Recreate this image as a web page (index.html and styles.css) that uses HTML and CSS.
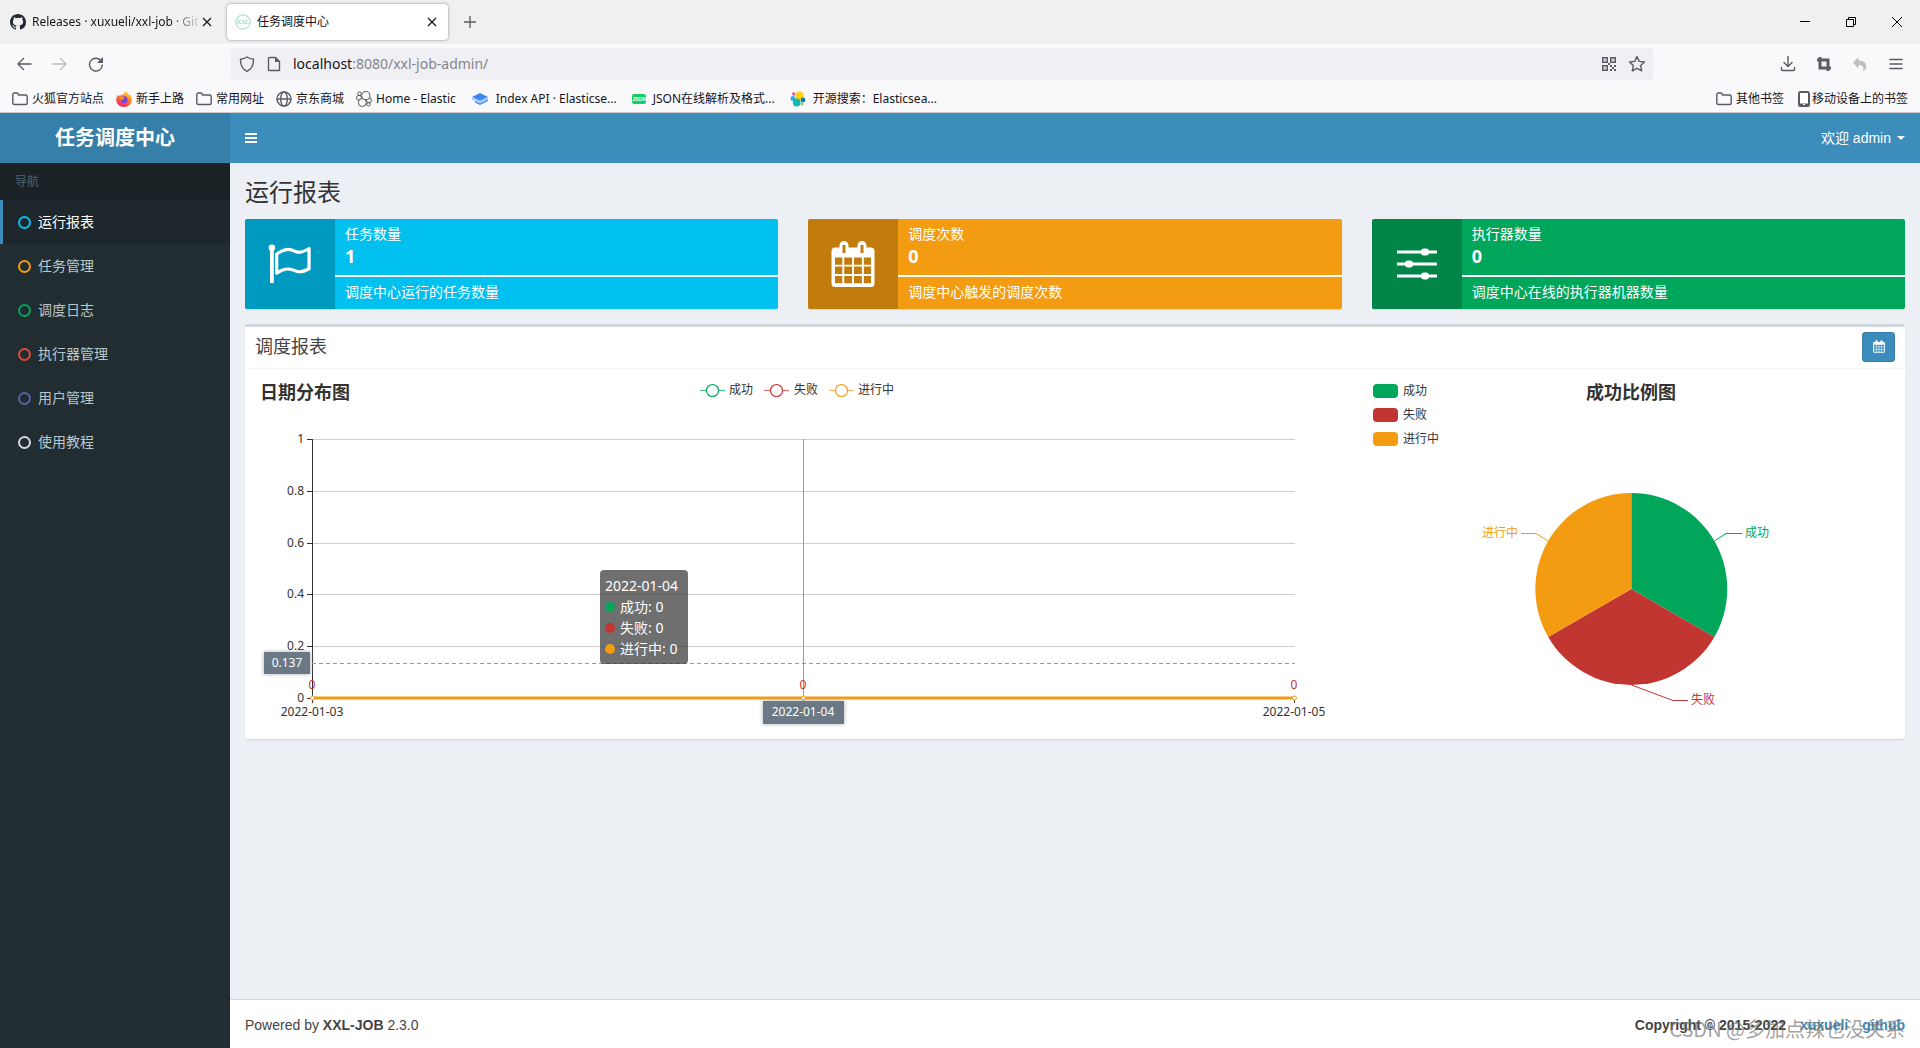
FILE: index.html
```html
<!DOCTYPE html>
<html lang="zh-CN">
<head>
<meta charset="utf-8">
<title>任务调度中心</title>
<link rel="stylesheet" href="styles.css">
</head>
<body>
<header class="browser">
  <div class="tabstrip">
    <div class="tab">
      <svg class="tab-icon" width="16" height="16" viewBox="0 0 16 16"><path fill="#24292f" d="M8 0C3.58 0 0 3.58 0 8c0 3.54 2.29 6.53 5.47 7.59.4.07.55-.17.55-.38 0-.19-.01-.82-.01-1.49-2.01.37-2.53-.49-2.69-.94-.09-.23-.48-.94-.82-1.13-.28-.15-.68-.52-.01-.53.63-.01 1.08.58 1.23.82.72 1.21 1.87.87 2.33.66.07-.52.28-.87.51-1.07-1.78-.2-3.64-.89-3.64-3.95 0-.87.31-1.59.82-2.15-.08-.2-.36-1.02.08-2.12 0 0 .67-.21 2.2.82a7.6 7.6 0 0 1 4 0c1.53-1.04 2.2-.82 2.2-.82.44 1.1.16 1.92.08 2.12.51.56.82 1.27.82 2.15 0 3.07-1.87 3.75-3.65 3.95.29.25.54.73.54 1.48 0 1.07-.01 1.93-.01 2.2 0 .21.15.46.55.38A8.01 8.01 0 0 0 16 8c0-4.42-3.58-8-8-8z"/></svg>
      <span class="tab-title fade">Releases · xuxueli/xxl-job · Git</span>
      <button class="tab-close" aria-label="关闭标签页"><svg width="10" height="10" viewBox="0 0 10 10"><path d="M1 1l8 8M9 1L1 9" stroke="#15141a" stroke-width="1.2"/></svg></button>
    </div>
    <div class="tab active">
      <svg class="tab-icon" width="16" height="16" viewBox="0 0 16 16"><circle cx="8" cy="8" r="7.2" fill="#fff" stroke="#9ad9c0"/><text x="8" y="10" text-anchor="middle" class="xxl-mark">XXL</text></svg>
      <span class="tab-title">任务调度中心</span>
      <button class="tab-close" aria-label="关闭标签页"><svg width="10" height="10" viewBox="0 0 10 10"><path d="M1 1l8 8M9 1L1 9" stroke="#15141a" stroke-width="1.2"/></svg></button>
    </div>
    <button class="new-tab" aria-label="新建标签页"><svg width="12" height="12" viewBox="0 0 12 12"><path d="M6 0v12M0 6h12" stroke="#5b5b66" stroke-width="1.3"/></svg></button>
    <div class="window-controls">
      <button aria-label="最小化"><svg width="10" height="10" viewBox="0 0 10 10"><path d="M0 4.500h10" stroke="#000"/></svg></button>
      <button aria-label="还原"><svg width="10" height="10" viewBox="0 0 10 10"><path d="M.5 2.500h7v7h-7zM2.500 2V.5h7v7H8" fill="none" stroke="#000"/></svg></button>
      <button aria-label="关闭"><svg width="10" height="10" viewBox="0 0 10 10"><path d="M0 0l10 10M10 0L0 10" stroke="#000"/></svg></button>
    </div>
  </div>

  <div class="toolbar">
    <div class="nav-buttons">
      <button aria-label="后退"><svg width="16" height="16" viewBox="0 0 16 16"><path d="M15 8H2M7.500 2.500L2 8l5.500 5.500" class="line"/></svg></button>
      <button aria-label="前进" disabled><svg width="16" height="16" viewBox="0 0 16 16"><path d="M1 8h13M8.500 2.500L14 8l-5.500 5.500" class="line pale"/></svg></button>
      <button aria-label="刷新"><svg width="16" height="16" viewBox="0 0 16 16"><path d="M13.500 5.500A6.400 6.400 0 1 0 14.300 9" class="line"/><path d="M15 1v6H9z" fill="#5b5b66"/></svg></button>
    </div>
    <div class="urlbar">
      <svg width="16" height="16" viewBox="0 0 16 16"><path d="M8 1c2 1.500 4 2 6.500 2.200C14.700 9 12.500 13 8 15.300 3.500 13 1.300 9 1.500 3.200 4 3 6 2.500 8 1z" class="line"/></svg>
      <svg width="16" height="16" viewBox="0 0 16 16"><path d="M3.500 1.500h6l4 4v9h-10a1 1 0 0 1-1-1v-11a1 1 0 0 1 1-1z" class="line"/><path d="M9 1v5h5z" fill="#5b5b66"/></svg>
      <div class="url" role="textbox" aria-label="地址" contenteditable="true" spellcheck="false">localhost<span class="url-rest">:8080/xxl-job-admin/</span></div>
      <svg width="16" height="16" viewBox="0 0 16 16" fill="#5b5b66"><path d="M1 1h6v6H1zM2.500 2.500v3h3v-3zM9 1h6v6H9zM10.500 2.500v3h3v-3zM1 9h6v6H1zM2.500 10.500v3h3v-3z" fill-rule="evenodd"/><path d="M3.500 3.500h1v1h-1zM11.500 3.500h1v1h-1zM3.500 11.500h1v1h-1zM9 9h2v2H9zM11 11h2v2h-2zM13 9h2v2h-2zM9 13h2v2H9zM13 13h2v2h-2zM7 7h2v2H7z"/></svg>
      <svg width="18" height="18" viewBox="0 0 18 18"><path d="M9 1.500l2.200 4.900 5.300.6-3.900 3.600 1.100 5.300L9 13.300l-4.700 2.600 1.100-5.300L1.500 7l5.300-.6z" class="line"/></svg>
    </div>
    <div class="tool-buttons">
      <button aria-label="下载"><svg width="16" height="16" viewBox="0 0 16 16"><path d="M8 0v10M4 6.500L8 10.500l4-4M1.500 11.500v2q0 1 1 1h11q1 0 1-1v-2" class="line"/></svg></button>
      <button aria-label="截图"><svg width="16" height="16" viewBox="0 0 16 16"><path d="M4 1v11h11M1 4h11v11" fill="none" stroke="#5b5b66" stroke-width="3"/></svg></button>
      <button aria-label="撤销" disabled><svg width="16" height="16" viewBox="0 0 16 16"><path d="M6.500 1v3.500C12 4.500 15 7.500 14 12c-.5 1.500-1.500 2.500-3.500 3 2.500-3.500 0-6-4-6v3.500L1 6.700z" fill="#bdbdc2"/></svg></button>
      <button aria-label="菜单"><svg width="14" height="12" viewBox="0 0 14 12"><path d="M1 1.500h12M1 6h12M1 10.500h12" class="line"/></svg></button>
    </div>
  </div>

  <nav class="bookmarks" aria-label="书签">
    <a href="#"><svg width="16" height="14" viewBox="0 0 16 14"><path d="M.8 2.500q0-1.500 1.500-1.500h3l1.500 2h6.900q1.500 0 1.500 1.500v6.500q0 1.500-1.500 1.500H2.300q-1.500 0-1.500-1.500z" class="line"/></svg>火狐官方站点</a>
    <a href="#"><svg width="16" height="16" viewBox="0 0 16 16"><defs><linearGradient id="fox" x1="0.800" y1="0" x2="0.300" y2="1"><stop offset="0" stop-color="#ffe23a"/><stop offset=".5" stop-color="#ff7a28"/><stop offset="1" stop-color="#f0206c"/></linearGradient></defs><path d="M9.500 0c2 1.500 2 2.500 3.500 4l1-.5c1.500 2 2 4 1.500 6.500-1 4-4 6-7.500 6-4.500 0-8-3.500-7.700-8C.4 6.500 1 5 2.200 3.700L3 5l2-1c1.500 0 2-1 3-1.200Q8 1.500 9.500 0z" fill="url(#fox)"/><circle cx="8.200" cy="8.700" r="3.400" fill="#7542e5"/><path d="M4 6.500c2-1 4-.5 5 1-1.500-.2-2 .5-2 1.200-1.500.3-3-.7-3-2.200z" fill="#ff9a1f"/></svg>新手上路</a>
    <a href="#"><svg width="16" height="14" viewBox="0 0 16 14"><path d="M.8 2.500q0-1.500 1.500-1.500h3l1.500 2h6.900q1.500 0 1.500 1.500v6.500q0 1.500-1.500 1.500H2.300q-1.500 0-1.500-1.500z" class="line"/></svg>常用网址</a>
    <a href="#"><svg width="16" height="16" viewBox="0 0 16 16"><g class="line"><circle cx="8" cy="8" r="7"/><ellipse cx="8" cy="8" rx="3.300" ry="7"/><path d="M1 8h14"/></g></svg>京东商城</a>
    <a href="#"><svg width="16" height="16" viewBox="0 0 16 16"><g fill="#f9f9fb" stroke="#555"><circle cx="3.600" cy="2.700" r="1.800"/><circle cx="3" cy="6.800" r="2.500"/><circle cx="12.500" cy="13.300" r="1.700"/><circle cx="13" cy="9.300" r="2.500"/><circle cx="6.300" cy="11.500" r="4"/><circle cx="9.800" cy="4.600" r="4.100"/></g></svg>Home - Elastic</a>
    <a href="#" class="wide-gap"><svg width="18" height="16" viewBox="0 0 18 16"><path d="M9 2l8 4-8 4-8-4z" fill="#3c86f4"/><path d="M1 6l8 4 8-4v2.500l-8 4-8-4z" fill="#a9caff"/><path d="M4 10l5 2.500L17 8.500V10l-8 4-5-2.500z" fill="#3c86f4"/></svg>Index API · Elasticse...</a>
    <a href="#" class="wide-gap"><svg width="14" height="10" viewBox="0 0 14 10"><rect width="14" height="10" rx="2" fill="#19ce60"/><text x="7" y="7" text-anchor="middle" class="json-mark">JSON</text></svg>JSON在线解析及格式...</a>
    <a href="#" class="wide-gap"><svg width="16" height="16" viewBox="0 0 16 16"><circle cx="9.500" cy="4.500" r="4" fill="#fed10a"/><circle cx="3.700" cy="3" r="1.700" fill="#f04e98"/><circle cx="3" cy="7.500" r="2.500" fill="#3ba8df"/><circle cx="13" cy="9" r="2.400" fill="#0b7aa5"/><circle cx="6.700" cy="11.500" r="3.900" fill="#17b7ae"/><circle cx="12.200" cy="13" r="1.500" fill="#93c83e"/></svg>开源搜索：Elasticsea...</a>
    <a href="#" class="push-right"><svg width="16" height="14" viewBox="0 0 16 14"><path d="M.8 2.500q0-1.500 1.500-1.500h3l1.500 2h6.900q1.500 0 1.500 1.500v6.500q0 1.500-1.500 1.500H2.300q-1.500 0-1.500-1.500z" class="line"/></svg>其他书签</a>
    <a href="#" class="mobile"><svg width="12" height="16" viewBox="0 0 12 16"><rect x="1" y="1" width="10" height="14" rx="1.500" fill="#fff" stroke="#5b5b66" stroke-width="2"/><path d="M1 12.500h10V15H1z" fill="#5b5b66"/><path d="M5 13.500h2" stroke="#fff"/></svg>移动设备上的书签</a>
  </nav>
</header>

<div class="app">
  <aside class="sidebar">
    <a href="#" class="logo">任务调度中心</a>
    <h2 class="side-heading">导航</h2>
    <ul class="side-menu">
      <li><a href="#" class="current"><i class="ring aqua"></i>运行报表</a></li>
      <li><a href="#"><i class="ring yellow"></i>任务管理</a></li>
      <li><a href="#"><i class="ring green"></i>调度日志</a></li>
      <li><a href="#"><i class="ring red"></i>执行器管理</a></li>
      <li><a href="#"><i class="ring purple"></i>用户管理</a></li>
      <li><a href="#"><i class="ring gray"></i>使用教程</a></li>
    </ul>
  </aside>

  <div class="main">
    <header class="topbar">
      <button class="menu-toggle" aria-label="切换导航"><svg width="12" height="12" viewBox="0 0 12 12"><path d="M0 2h12M0 6h12M0 10h12" stroke="#fff" stroke-width="2"/></svg></button>
      <button class="user-menu">欢迎 admin<i class="caret"></i></button>
    </header>

    <main class="content">
      <h1>运行报表</h1>
      <section class="stats">
        <article class="stat stat-aqua">
          <div class="stat-icon"><svg width="44" height="40" viewBox="0 0 46 42"><circle cx="4" cy="4" r="3.500" fill="#fff"/><path d="M4 4v37" stroke="#fff" stroke-width="4"/><path d="M9 10.500C17 5 22 4.500 28 7.500c6 2.500 9 .5 15-2.500v21c-6 3.500-10 4.500-15 2-6-3-11-2.500-19 2.500z" fill="none" stroke="#fff" stroke-width="3.400" stroke-linejoin="round"/></svg></div>
          <div class="stat-body"><span>任务数量</span><strong>1</strong><p>调度中心运行的任务数量</p></div>
        </article>
        <article class="stat stat-yellow">
          <div class="stat-icon"><svg width="44" height="46" viewBox="0 0 44 46"><path fill="#fff" fill-rule="evenodd" d="M4 6.500h4.500V4.500a4.500 4.500 0 0 1 9 0v2h9V4.500a4.500 4.500 0 0 1 9 0v2H40a3.500 3.500 0 0 1 3.500 3.500v32.500A3.500 3.500 0 0 1 40 46H4a3.500 3.500 0 0 1-3.500-3.500V10A3.500 3.500 0 0 1 4 6.500zM11.500 4v8h3V4zM29.500 4v8h3V4zM4 16.500v7.200h7.300v-7.200zM13.200 16.500v7.200h7.900v-7.200zM23 16.500v7.200h7.900v-7.200zM32.800 16.500v7.200H40v-7.200zM4 25.600v7.400h7.300v-7.400zM13.200 25.600v7.400h7.900v-7.400zM23 25.600v7.400h7.900v-7.400zM32.800 25.600v7.400H40v-7.400zM4 35v7.200h7.300V35zM13.200 35v7.200h7.900V35zM23 35v7.200h7.900V35zM32.800 35v7.200H40V35z"/></svg></div>
          <div class="stat-body"><span>调度次数</span><strong>0</strong><p>调度中心触发的调度次数</p></div>
        </article>
        <article class="stat stat-green">
          <div class="stat-icon"><svg width="40" height="32" viewBox="0 0 40 32"><path d="M0 4h40M0 16h40M0 28h40" stroke="#fff" stroke-width="3"/><g fill="#fff"><rect x="24" y="0.500" width="8" height="7" rx="3"/><rect x="8" y="12.500" width="8" height="7" rx="3"/><rect x="24" y="24.500" width="8" height="7" rx="3"/></g></svg></div>
          <div class="stat-body"><span>执行器数量</span><strong>0</strong><p>调度中心在线的执行器机器数量</p></div>
        </article>
      </section>

      <section class="panel">
        <div class="panel-head">
          <h2>调度报表</h2>
          <button class="date-button" aria-label="选择日期"><svg width="12" height="13" viewBox="0 0 44 46"><path fill="#fff" fill-rule="evenodd" d="M4 6.500h4.500V4.500a4.500 4.500 0 0 1 9 0v2h9V4.500a4.500 4.500 0 0 1 9 0v2H40a3.500 3.500 0 0 1 3.500 3.500v32.500A3.500 3.500 0 0 1 40 46H4a3.500 3.500 0 0 1-3.500-3.500V10A3.500 3.500 0 0 1 4 6.500zM4 16.500v7.200h7.300v-7.200zM13.200 16.500v7.200h7.900v-7.200zM23 16.500v7.200h7.900v-7.200zM32.800 16.500v7.200H40v-7.200zM4 25.600v7.400h7.300v-7.400zM13.200 25.600v7.400h7.900v-7.400zM23 25.600v7.400h7.900v-7.400zM32.800 25.600v7.400H40v-7.400zM4 35v7.200h7.300V35zM13.200 35v7.200h7.900V35zM23 35v7.200h7.900V35zM32.800 35v7.200H40V35z"/></svg></button>
        </div>
        <div class="charts">
          <div class="chart-line">
            <svg class="chart" viewBox="0 0 1083 350" preserveAspectRatio="xMinYMin meet" role="img" aria-label="日期分布图">
              <text x="5" y="20" class="chart-title">日期分布图</text>
              <g fill="#fff" stroke-width="1.200">
                <g stroke="#00a65a"><path d="M445 11.500h25" stroke-opacity=".7"/><circle cx="457.500" cy="11.500" r="6"/></g>
                <g stroke="#c23632"><path d="M509 11.500h25" stroke-opacity=".7"/><circle cx="521.500" cy="11.500" r="6"/></g>
                <g stroke="#f39c12"><path d="M574 11.500h25" stroke-opacity=".7"/><circle cx="586.500" cy="11.500" r="6"/></g>
              </g>
              <text x="474" y="15">成功</text>
              <text x="539" y="15">失败</text>
              <text x="603" y="15">进行中</text>
              <path d="M57 60.500h983M57 112.500h983M57 164.500h983M57 215.500h983M57 267.500h983" stroke="#ccc"/>
              <path d="M57.500 60v264M52 60.500h5M52 112.500h5M52 164.500h5M52 215.500h5M52 267.500h5M52 319.500h988M548.500 319v5M1039.500 319v5" stroke="#333" fill="none"/>
              <g text-anchor="end">
                <text x="49" y="64">1</text>
                <text x="49" y="116">0.8</text>
                <text x="49" y="168">0.6</text>
                <text x="49" y="219">0.4</text>
                <text x="49" y="271">0.2</text>
                <text x="49" y="323">0</text>
              </g>
              <g text-anchor="middle">
                <text x="57" y="337">2022-01-03</text>
                <text x="1039" y="337">2022-01-05</text>
              </g>
              <path d="M548.500 60v259" stroke="#999"/>
              <path d="M57 284.500h983" stroke="#999" stroke-dasharray="4 3"/>
              <path d="M57 319h983" stroke="#f39c12" stroke-width="3"/>
              <g fill="#fff" stroke="#f39c12"><circle cx="57.500" cy="319" r="2"/><circle cx="548.500" cy="319" r="2"/><circle cx="1039.500" cy="319" r="2"/></g>
              <g text-anchor="middle" class="value">
                <text x="57" y="310">0</text><text x="548" y="310">0</text><text x="1039" y="310">0</text>
              </g>
              <g class="pointer-label" text-anchor="middle">
                <rect x="9" y="273" width="46" height="22"/>
                <text x="32" y="288">0.137</text>
                <rect x="508" y="322" width="81" height="23"/>
                <text x="548" y="337">2022-01-04</text>
              </g>
            </svg>
            <div class="tooltip" role="tooltip">
              <div>2022-01-04</div>
              <div><i class="dot green"></i>成功: 0</div>
              <div><i class="dot red"></i>失败: 0</div>
              <div><i class="dot yellow"></i>进行中: 0</div>
            </div>
          </div>
          <div class="chart-pie">
            <svg class="chart" viewBox="0 0 526 350" preserveAspectRatio="xMinYMin meet" role="img" aria-label="成功比例图">
              <rect x="5" y="5" width="25" height="14" rx="4" fill="#00a65a"/>
              <rect x="5" y="29" width="25" height="14" rx="4" fill="#c23632"/>
              <rect x="5" y="53" width="25" height="14" rx="4" fill="#f39c12"/>
              <text x="35" y="16">成功</text>
              <text x="35" y="40">失败</text>
              <text x="35" y="64">进行中</text>
              <text x="263" y="20" text-anchor="middle" class="chart-title">成功比例图</text>
              <path d="M263.300 210V114A96 96 0 0 1 346.400 258z" fill="#00a65a"/>
              <path d="M263.300 210L346.400 258A96 96 0 0 1 180.200 258z" fill="#c23632"/>
              <path d="M263.300 210L180.200 258A96 96 0 0 1 263.300 114z" fill="#f39c12"/>
              <path d="M346.500 162L358 154.500h16" fill="none" stroke="#00a65a"/>
              <path d="M263.500 306L305 321.500h15" fill="none" stroke="#c23632"/>
              <path d="M180 162L168 154.500h-15" fill="none" stroke="#f39c12"/>
              <text x="377" y="158" class="green-text">成功</text>
              <text x="323" y="325" class="value">失败</text>
              <text x="150" y="158" text-anchor="end" class="yellow-text">进行中</text>
            </svg>
          </div>
        </div>
      </section>
    </main>

    <footer class="footer">
      <span>Powered by <b>XXL-JOB</b> 2.3.0</span>
      <strong class="copyright"><span>Copyright © 2015-2022</span><a href="#">xuxueli</a><a href="#">github</a></strong>
      <span class="watermark">CSDN @多加点辣也没关系</span>
    </footer>
  </div>
</div>
</body>
</html>
```
FILE: styles.css
```css
* { box-sizing: border-box; }
body {
  margin: 0;
  min-height: 100vh;
  display: flex;
  flex-direction: column;
  background: #ecf0f5;
  color: #333;
  font: 14px/20px "Liberation Sans", "Noto Sans CJK SC", sans-serif;
}
h1, h2, p, ul { margin: 0; padding: 0; }
h1, h2 { font-weight: 400; }
ul { list-style: none; }
a { color: inherit; text-decoration: none; }
button {
  border: 0;
  padding: 0;
  background: none;
  color: inherit;
  font: inherit;
  display: flex;
  align-items: center;
  justify-content: center;
}
svg { display: block; flex: none; }
.line { fill: none; stroke: #5b5b66; stroke-width: 1.4; stroke-linejoin: round; stroke-linecap: round; }
.pale { stroke: #bdbdc2; }

/* browser frame */
.browser {
  background: #f9f9fb;
  border-bottom: 1px solid #ccc;
  color: #15141a;
  font: 12px/16px "Noto Sans", "Noto Sans CJK SC", sans-serif;
}
.tabstrip { display: flex; height: 44px; background: #f0f0f0; }
.tab {
  display: flex;
  align-items: center;
  width: 221px;
  height: 36px;
  margin: 4px 0 0 2px;
  padding: 0 10px 0 8px;
  border-radius: 4px;
}
.tab + .tab { margin-left: 4px; }
.tab.active { background: #fff; box-shadow: 0 0 3px #8a8a99; }
.tab-icon { margin-right: 6px; }
.tab-title { flex: 1; min-width: 0; overflow: hidden; white-space: nowrap; }
.fade { mask-image: linear-gradient(to left, transparent, #000 32px); }
.tab-close { width: 12px; height: 20px; }
.new-tab { width: 43px; height: 36px; margin-top: 4px; }
.window-controls { display: flex; margin-left: auto; }
.window-controls button { width: 46px; height: 44px; }
.toolbar { display: flex; height: 40px; padding: 4px 0; }
.nav-buttons { display: flex; width: 231px; padding-left: 6px; }
.nav-buttons button, .tool-buttons button { width: 36px; height: 32px; }
.tool-buttons { display: flex; justify-content: flex-end; width: 267px; padding-right: 6px; }
.urlbar {
  flex: 1;
  display: flex;
  align-items: center;
  gap: 11px;
  padding: 0 7px 0 8px;
  border-radius: 4px;
  background: #f0f0f4;
}
.url { flex: 1; font-size: 14px; line-height: 20px; outline: 0; }
.url-rest { color: #84848c; }
.bookmarks { display: flex; align-items: center; gap: 12px; height: 28px; padding: 1px 12px 0; white-space: nowrap; }
.bookmarks a { display: flex; align-items: center; gap: 4px; }
.bookmarks .wide-gap { gap: 7px; margin-left: 3px; }
.bookmarks .push-right { margin-left: auto; }
.bookmarks .mobile { gap: 2px; margin-left: 2px; }
.xxl-mark { font: 6px "Liberation Serif", serif; fill: #7fcfb0; }
.json-mark { font: bold 5px "Liberation Sans", sans-serif; fill: #fff; }

/* application shell */
.app { flex: 1; display: grid; grid-template-columns: 230px 1fr; }
.sidebar { background: #222d32; color: #b8c7ce; }
.logo {
  display: block;
  height: 50px;
  background: #367fa9;
  color: #fff;
  font-size: 20px;
  font-weight: 700;
  line-height: 51px;
  text-align: center;
}
.side-heading { padding: 11px 15px 9px; background: #1a2226; color: #4b646f; font-size: 12px; line-height: 17px; }
.side-menu a {
  display: flex;
  align-items: center;
  gap: 7px;
  height: 44px;
  padding-left: 15px;
  border-left: 3px solid transparent;
}
.side-menu .current { border-left-color: #3c8dbc; background: #1e282c; color: #fff; }
.ring { width: 13px; height: 13px; border: 2px solid; border-radius: 50%; }
.ring.aqua { color: #00c0ef; }
.ring.yellow { color: #f39c12; }
.ring.green { color: #00a65a; }
.ring.red { color: #dd4b39; }
.ring.purple { color: #605ca8; }
.ring.gray { color: #d2d6de; }
.main { display: flex; flex-direction: column; min-width: 0; }
.topbar { display: flex; justify-content: space-between; height: 50px; background: #3c8dbc; color: #fff; }
.menu-toggle { padding: 0 15px; }
.user-menu { gap: 6px; padding: 0 15px; }
.caret { border: 4px solid transparent; border-top-color: #fff; border-bottom: 0; }

/* dashboard */
.content { flex: 1; padding: 15px; }
h1 { padding-bottom: 11px; font-size: 24px; line-height: 30px; }
.stats { display: grid; grid-template-columns: repeat(3, 1fr); gap: 30px; }
.stat { display: flex; height: 90px; border-radius: 2px; overflow: hidden; color: #fff; box-shadow: 0 1px 1px rgba(0, 0, 0, .1); }
.stat-aqua { background: #00c0ef; }
.stat-yellow { background: #f39c12; }
.stat-green { background: #00a65a; }
.stat-icon { display: flex; align-items: center; justify-content: center; width: 90px; background: rgba(0, 0, 0, .2); }
.stat-body { flex: 1; display: flex; flex-direction: column; padding-top: 5px; }
.stat-body span, .stat-body strong { padding: 0 10px; }
.stat-body strong { font: 700 18px/25px "Noto Sans", sans-serif; }
.stat-body p { margin-top: 6px; padding: 5px 10px; border-top: 2px solid #fff; }
.panel { margin-top: 15px; border-top: 3px solid #d2d6de; border-radius: 3px; background: #fff; box-shadow: 0 1px 1px rgba(0, 0, 0, .1); }
.panel-head { display: flex; align-items: center; justify-content: space-between; height: 42px; padding: 0 10px 2px; border-bottom: 1px solid #f4f4f4; color: #444; }
.panel-head h2 { font-size: 18px; line-height: 20px; }
.date-button { width: 33px; height: 30px; border: 1px solid #367fa9; border-radius: 3px; background: #3c8dbc; }
.charts { display: grid; grid-template-columns: 2fr 1fr; padding: 10px 0; margin: 0 -5px; }
.chart-line, .chart-pie { padding: 0 15px; min-width: 0; }
.chart-line { position: relative; }
.chart { width: 100%; height: 350px; fill: #333; font: 12px "Noto Sans", "Noto Sans CJK SC", sans-serif; }
.chart-title { font-size: 18px; font-weight: 700; }
.value { fill: #c23632; }
.green-text { fill: #00a65a; }
.yellow-text { fill: #f39c12; }
.pointer-label { fill: #fff; }
.pointer-label rect { fill: #6a7985; filter: drop-shadow(0 0 2px #aaa); }
.tooltip {
  position: absolute;
  left: 360px;
  top: 191px;
  min-width: 88px;
  padding: 5px;
  border-radius: 4px;
  background: rgba(50, 50, 50, .7);
  color: #fff;
  font: 14px/21px "Noto Sans", "Noto Sans CJK SC", sans-serif;
  white-space: nowrap;
}
.dot { display: inline-block; width: 10px; height: 10px; margin-right: 5px; border-radius: 50%; }
.dot.green { background: #00a65a; }
.dot.red { background: #c23632; }
.dot.yellow { background: #f39c12; }
.footer { position: relative; display: flex; justify-content: space-between; padding: 15px 15px 13px; border-top: 1px solid #d2d6de; background: #fff; color: #444; }
.copyright { display: flex; gap: 14px; }
.copyright a { color: #3c8dbc; }
.watermark {
  position: absolute;
  right: 15px;
  top: 17px;
  color: rgba(110, 110, 110, .65);
  font: 20px/24px "Noto Sans CJK SC", sans-serif;
  pointer-events: none;
}
```
